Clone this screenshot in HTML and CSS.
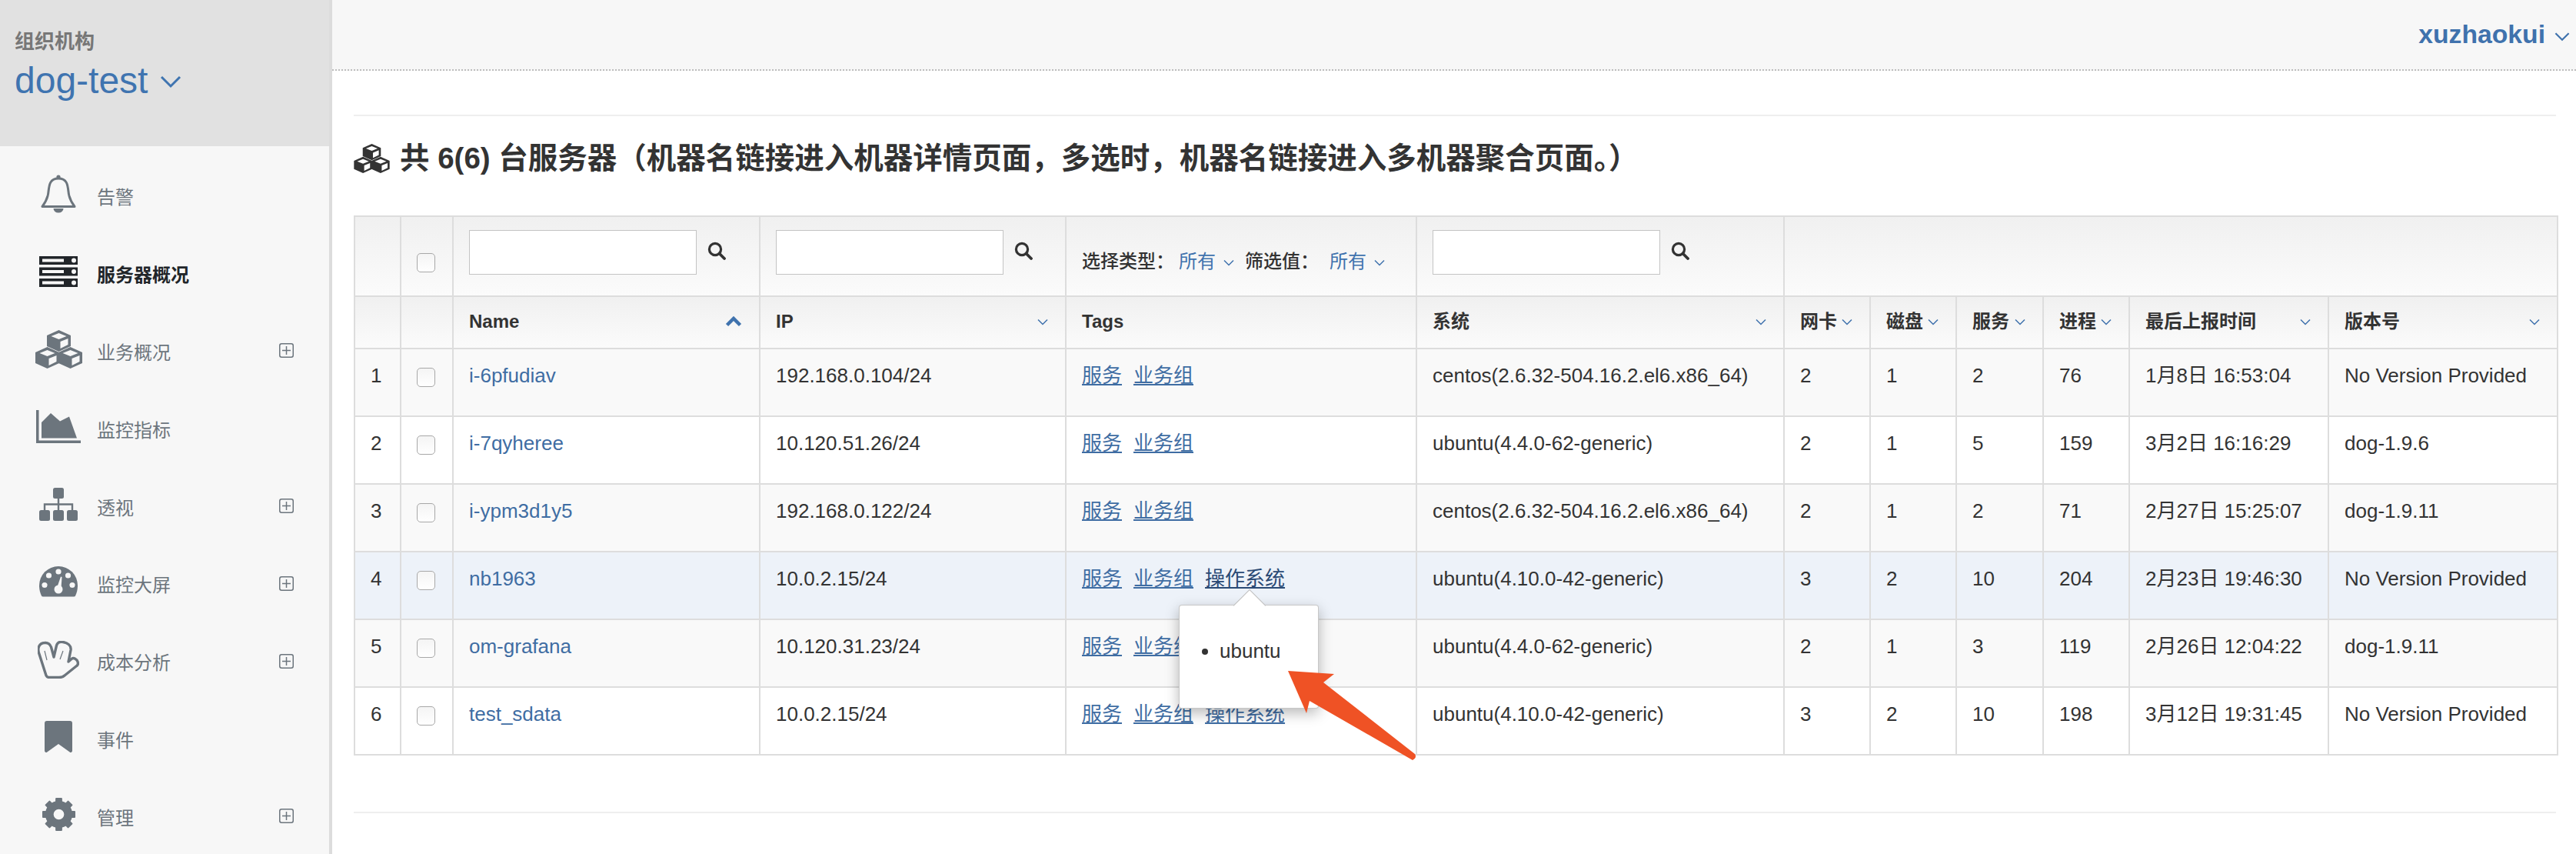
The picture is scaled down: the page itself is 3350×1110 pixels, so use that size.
FILE: index.html
```html
<!DOCTYPE html>
<html lang="zh-CN">
<head>
<meta charset="utf-8">
<title>服务器概况</title>
<link rel="stylesheet" href="styles.css">
</head>
<body>
<svg class="defs" width="0" height="0" aria-hidden="true">
  <defs>
    <path id="cube" fill="currentColor" fill-rule="evenodd" d="M15.5 0L31 7V21L15.5 28L0 21V7Z M15.5 4L25.5 8L15.5 12L5.5 8Z M17.5 15L27.5 11V19L17.5 24Z"/>
    <symbol id="cubes" viewBox="0 0 61 50">
      <use href="#cube" x="15" y="0"/><use href="#cube" x="0" y="22"/><use href="#cube" x="30" y="22"/>
    </symbol>
    <symbol id="plus" viewBox="0 0 19 19">
      <rect x="0.75" y="0.75" width="17.5" height="17.5" rx="2.5" fill="none" stroke="currentColor" stroke-width="1.5"/>
      <path d="M9.5 4V15M4 9.5H15" fill="none" stroke="currentColor" stroke-width="1.5"/>
    </symbol>
    <symbol id="search" viewBox="0 0 24 24">
      <circle cx="10" cy="10" r="7.6" fill="none" stroke="currentColor" stroke-width="3.2"/>
      <path d="M15.5 15.5L22 22" fill="none" stroke="currentColor" stroke-width="3.8" stroke-linecap="round"/>
    </symbol>
    <symbol id="chev" viewBox="0 0 14 9">
      <path d="M1 1.5L7 7.5L13 1.5" fill="none" stroke="currentColor" stroke-width="1.5"/>
    </symbol>
  </defs>
</svg>

<aside class="sidebar">
  <div class="org">
    <div class="org-label">组织机构</div>
    <div class="org-name">dog-test <svg class="org-chev"><use href="#chev"/></svg></div>
  </div>
  <nav class="nav">
    <a class="nav-item">
      <span class="nav-icon"><svg width="46" height="50" viewBox="0 0 46 50"><circle cx="23" cy="3" r="2.6" fill="currentColor"/><path d="M23 5C12 5 11 13 10 22C9.5 30 6 36 2 41.5H44C40 36 36.5 30 36 22C35 13 34 5 23 5Z" fill="none" stroke="currentColor" stroke-width="3" stroke-linejoin="round"/><path d="M16.5 44a6.5 5.5 0 0 0 13 0Z" fill="currentColor"/></svg></span>
      <span class="nav-text">告警</span>
    </a>
    <a class="nav-item active">
      <span class="nav-icon"><svg width="50" height="40" viewBox="0 0 50 40"><path fill="currentColor" fill-rule="evenodd" d="M0 0H50V11H0Z M4 3.5V7.5H32V3.5Z M0 14.5H50V25.5H0Z M4 18V22H32V18Z M0 29H50V40H0Z M4 32.5V36.500H32V32.500Z"/><circle cx="45" cy="5.500" r="3" fill="#f7f7f7"/><circle cx="45" cy="20" r="3" fill="#f7f7f7"/><circle cx="45" cy="34.500" r="3" fill="#f7f7f7"/></svg></span>
      <span class="nav-text">服务器概况</span>
    </a>
    <a class="nav-item">
      <span class="nav-icon"><svg width="61" height="50"><use href="#cubes"/></svg></span>
      <span class="nav-text">业务概况</span>
      <svg class="nav-plus"><use href="#plus"/></svg>
    </a>
    <a class="nav-item">
      <span class="nav-icon"><svg width="58" height="43" viewBox="0 0 58 43"><path fill="currentColor" d="M0 0H3.500V39.500H58V43H0Z M7 36.500V16L19 4L31 14.500L43 8.500L53 36.500Z"/></svg></span>
      <span class="nav-text">监控指标</span>
    </a>
    <a class="nav-item">
      <span class="nav-icon"><svg width="50" height="43" viewBox="0 0 50 43"><g fill="currentColor"><rect x="18" width="14" height="14" rx="2.500"/><rect y="29" width="14" height="14" rx="2.500"/><rect x="18" y="29" width="14" height="14" rx="2.500"/><rect x="36" y="29" width="14" height="14" rx="2.500"/></g><path d="M25 14V29M7 29V21.500H43V29" fill="none" stroke="currentColor" stroke-width="2.400"/></svg></span>
      <span class="nav-text">透视</span>
      <svg class="nav-plus"><use href="#plus"/></svg>
    </a>
    <a class="nav-item">
      <span class="nav-icon"><svg width="50" height="40" viewBox="0 0 50 40"><path fill="currentColor" d="M25 0A25 25 0 0 1 50 25C50 30 49 34 47 38.500Q46.500 39.500 45 39.500H5Q3.500 39.500 3 38.500C1 34 0 30 0 25A25 25 0 0 1 25 0Z"/><g fill="#f7f7f7"><circle cx="25" cy="7" r="3.600"/><circle cx="12.500" cy="12" r="3.600"/><circle cx="37.500" cy="12" r="3.600"/><circle cx="7" cy="24.500" r="3.600"/><circle cx="43" cy="24.500" r="3.600"/><circle cx="25" cy="30" r="5.500"/><path d="M23 28L28 13.500L29.500 14L28.500 29Z"/></g></svg></span>
      <span class="nav-text">监控大屏</span>
      <svg class="nav-plus"><use href="#plus"/></svg>
    </a>
    <a class="nav-item">
      <span class="nav-icon"><svg width="54" height="49" viewBox="0 0 54 49"><path d="M11 45L2 17C-1 9 2 3 9 2.500C14 2 16 4 17.500 8L21 21L24.500 6C26 1 30 1 33 1.500C39 2.500 44 6 43 12L40 27L44 23.500C47 21 51 24 52 27C53 30 52 32 50 33L35 45C33 47 30 47.500 28 47.500H15C13 47.500 12 47 11 45Z" fill="none" stroke="currentColor" stroke-width="3.400" stroke-linejoin="round"/><path d="M9 13L12 25M33 13L29 24" fill="none" stroke="currentColor" stroke-width="1.200"/></svg></span>
      <span class="nav-text">成本分析</span>
      <svg class="nav-plus"><use href="#plus"/></svg>
    </a>
    <a class="nav-item">
      <span class="nav-icon"><svg width="36" height="42" viewBox="0 0 36 42"><path fill="currentColor" d="M3 0H33A3 3 0 0 1 36 3V39A2 2 0 0 1 32.700 40.500L18 30L3.300 40.500A2 2 0 0 1 0 39V3A3 3 0 0 1 3 0Z"/></svg></span>
      <span class="nav-text">事件</span>
    </a>
    <a class="nav-item">
      <span class="nav-icon"><svg width="43" height="43" viewBox="0 0 44 44"><circle cx="22" cy="22" r="12.500" fill="none" stroke="currentColor" stroke-width="11"/><g fill="currentColor"><rect x="17.500" width="9" height="10" rx="1"/><rect x="17.500" width="9" height="10" rx="1" transform="rotate(45 22 22)"/><rect x="17.500" width="9" height="10" rx="1" transform="rotate(90 22 22)"/><rect x="17.500" width="9" height="10" rx="1" transform="rotate(135 22 22)"/><rect x="17.500" width="9" height="10" rx="1" transform="rotate(180 22 22)"/><rect x="17.500" width="9" height="10" rx="1" transform="rotate(225 22 22)"/><rect x="17.500" width="9" height="10" rx="1" transform="rotate(270 22 22)"/><rect x="17.500" width="9" height="10" rx="1" transform="rotate(315 22 22)"/></g></svg></span>
      <span class="nav-text">管理</span>
      <svg class="nav-plus"><use href="#plus"/></svg>
    </a>
  </nav>
</aside>

<main class="main">
  <header class="topbar">
    <span class="user">xuzhaokui</span>
    <svg class="user-chev"><use href="#chev"/></svg>
  </header>
  <section class="content">
    <hr class="rule">
    <h1 class="title"><svg class="title-icon"><use href="#cubes"/></svg>共 6(6) 台服务器（机器名链接进入机器详情页面，多选时，机器名链接进入多机器聚合页面。）</h1>
    <div class="table-wrap">
      <table class="grid">
        <colgroup>
          <col class="c-num"><col class="c-check"><col class="c-name"><col class="c-ip"><col class="c-tags"><col class="c-sys"><col class="c-small"><col class="c-small"><col class="c-small3"><col class="c-small"><col class="c-time"><col class="c-ver">
        </colgroup>
        <thead>
          <tr class="filters">
            <th></th>
            <th><input class="check check-head" type="checkbox"></th>
            <th><div class="search-box"><input class="search" type="text"><svg class="search-icon"><use href="#search"/></svg></div></th>
            <th><div class="search-box"><input class="search" type="text"><svg class="search-icon"><use href="#search"/></svg></div></th>
            <th class="tag-filter">
              <div class="tag-filter-row">
                <span>选择类型：</span><a class="drop">所有<svg class="drop-chev"><use href="#chev"/></svg></a>
                <span class="second">筛选值：</span><a class="drop">所有<svg class="drop-chev"><use href="#chev"/></svg></a>
              </div>
            </th>
            <th><div class="search-box"><input class="search" type="text"><svg class="search-icon"><use href="#search"/></svg></div></th>
            <th colspan="6"></th>
          </tr>
          <tr class="heads">
            <th></th>
            <th></th>
            <th><div class="head"><span>Name</span><svg class="sort-up" viewBox="0 0 22 14"><path d="M2.500 11.500L11 3L19.500 11.500" fill="none" stroke="currentColor" stroke-width="4.500"/></svg></div></th>
            <th><div class="head"><span>IP</span><svg class="sort"><use href="#chev"/></svg></div></th>
            <th><div class="head"><span>Tags</span></div></th>
            <th><div class="head"><span>系统</span><svg class="sort"><use href="#chev"/></svg></div></th>
            <th><div class="head"><span>网卡</span><svg class="sort"><use href="#chev"/></svg></div></th>
            <th><div class="head"><span>磁盘</span><svg class="sort"><use href="#chev"/></svg></div></th>
            <th><div class="head"><span>服务</span><svg class="sort"><use href="#chev"/></svg></div></th>
            <th><div class="head"><span>进程</span><svg class="sort"><use href="#chev"/></svg></div></th>
            <th><div class="head"><span>最后上报时间</span><svg class="sort"><use href="#chev"/></svg></div></th>
            <th><div class="head"><span>版本号</span><svg class="sort"><use href="#chev"/></svg></div></th>
          </tr>
        </thead>
        <tbody>
          <tr class="odd">
            <td>1</td><td><input class="check" type="checkbox"></td><td><a class="link">i-6pfudiav</a></td><td>192.168.0.104/24</td>
            <td><a class="tag">服务</a><a class="tag">业务组</a></td>
            <td>centos(2.6.32-504.16.2.el6.x86_64)</td><td>2</td><td>1</td><td>2</td><td>76</td><td>1月8日 16:53:04</td><td>No Version Provided</td>
          </tr>
          <tr>
            <td>2</td><td><input class="check" type="checkbox"></td><td><a class="link">i-7qyheree</a></td><td>10.120.51.26/24</td>
            <td><a class="tag">服务</a><a class="tag">业务组</a></td>
            <td>ubuntu(4.4.0-62-generic)</td><td>2</td><td>1</td><td>5</td><td>159</td><td>3月2日 16:16:29</td><td>dog-1.9.6</td>
          </tr>
          <tr class="odd">
            <td>3</td><td><input class="check" type="checkbox"></td><td><a class="link">i-ypm3d1y5</a></td><td>192.168.0.122/24</td>
            <td><a class="tag">服务</a><a class="tag">业务组</a></td>
            <td>centos(2.6.32-504.16.2.el6.x86_64)</td><td>2</td><td>1</td><td>2</td><td>71</td><td>2月27日 15:25:07</td><td>dog-1.9.11</td>
          </tr>
          <tr class="hover">
            <td>4</td><td><input class="check" type="checkbox"></td><td><a class="link">nb1963</a></td><td>10.0.2.15/24</td>
            <td><a class="tag">服务</a><a class="tag">业务组</a><a class="tag tag-on">操作系统</a></td>
            <td>ubuntu(4.10.0-42-generic)</td><td>3</td><td>2</td><td>10</td><td>204</td><td>2月23日 19:46:30</td><td>No Version Provided</td>
          </tr>
          <tr class="odd">
            <td>5</td><td><input class="check" type="checkbox"></td><td><a class="link">om-grafana</a></td><td>10.120.31.23/24</td>
            <td><a class="tag">服务</a><a class="tag">业务组</a></td>
            <td>ubuntu(4.4.0-62-generic)</td><td>2</td><td>1</td><td>3</td><td>119</td><td>2月26日 12:04:22</td><td>dog-1.9.11</td>
          </tr>
          <tr>
            <td>6</td><td><input class="check" type="checkbox"></td><td><a class="link">test_sdata</a></td><td>10.0.2.15/24</td>
            <td><a class="tag">服务</a><a class="tag">业务组</a><a class="tag">操作系统</a></td>
            <td>ubuntu(4.10.0-42-generic)</td><td>3</td><td>2</td><td>10</td><td>198</td><td>3月12日 19:31:45</td><td>No Version Provided</td>
          </tr>
        </tbody>
      </table>
      <div class="popover">
        <ul class="popover-list"><li>ubuntu</li></ul>
      </div>
      <svg class="annotation" width="160" height="130" viewBox="0 0 160 130"><path fill="#ef5225" d="M0 5L60 9L46 20L165 113Q168 118 162 121L28 44L24 60Z"/></svg>
    </div>
    <hr class="rule rule-bottom">
  </section>
</main>
</body>
</html>
```
FILE: styles.css
```css
* { box-sizing: border-box; }
html, body { margin: 0; height: 100%; }
body {
  display: flex;
  height: 1110px;
  overflow: hidden;
  background: #fff;
  font-family: "Liberation Sans", "Noto Sans CJK SC", sans-serif;
  font-size: 26px;
  color: #333;
}
.defs { position: absolute; }

/* Sidebar */
.sidebar {
  flex: 0 0 432px;
  background: #f7f7f7;
  border-right: 4px solid #dcdcdc;
}
.org {
  height: 190px;
  background: #e1e1e1;
  padding: 39px 19px 0;
}
.org-label { font-size: 26px; line-height: 30px; font-weight: 700; color: #777; }
.org-name { margin-top: 6px; font-size: 48px; line-height: 60px; color: #3f74b0; white-space: nowrap; }
.org-chev { width: 28px; height: 18px; margin-left: 2px; vertical-align: 6px; }
.nav { padding-top: 17px; }
.nav-item {
  display: flex;
  align-items: center;
  height: 100.800px;
  padding-right: 46px;
  color: #6c757d;
}
.nav-item.active { color: #212529; }
.nav-icon {
  flex: 0 0 62px;
  display: flex;
  justify-content: center;
  margin: 0 19px 10px 45px;
}
.nav-icon svg { display: block; }
.nav-text { font-size: 24px; line-height: 32px; }
.active .nav-text { font-weight: 700; }
.nav-plus { width: 19px; height: 19px; margin: 0 0 6px auto; }

/* Main */
.main { flex: 1; min-width: 0; display: flex; flex-direction: column; }
.topbar {
  flex: 0 0 92px;
  display: flex;
  align-items: flex-start;
  justify-content: flex-end;
  padding: 24px 8px 0 0;
  background: #f7f7f7;
  border-bottom: 2px dotted #bdbdbd;
}
.user { font-size: 33.700px; line-height: 40px; font-weight: 700; color: #3f72ad; }
.user-chev { width: 20px; height: 13px; margin: 17px 0 0 12px; color: #3f72ad; }
.content { padding: 0 26px 0 28px; }
.rule { height: 2px; margin: 57px 0 0; border: 0; background: #eee; }
.title {
  display: flex;
  align-items: center;
  margin: 35px 0 0;
  height: 40px;
  font-size: 38.500px;
  line-height: 40px;
  font-weight: 700;
  color: #333;
  white-space: nowrap;
}
.title-icon { width: 47px; height: 38px; margin: 0 13px 0 0; color: #333; }

/* Table */
.table-wrap { position: relative; margin-top: 54px; }
.grid {
  table-layout: fixed;
  width: 2865px;
  border-collapse: collapse;
}
.c-num { width: 60px; }
.c-check { width: 68px; }
.c-name { width: 399px; }
.c-ip { width: 398px; }
.c-tags { width: 456px; }
.c-sys { width: 478px; }
.c-small { width: 112px; }
.c-small3 { width: 113px; }
.c-time { width: 259px; }
.c-ver { width: 298px; }
.grid th, .grid td {
  border: 2px solid #ddd;
  padding: 0 0 0 20px;
  text-align: left;
  vertical-align: top;
  white-space: nowrap;
}
.grid thead th { background: linear-gradient(#f0f0f0, #fbfbfb); }
.filters th { height: 104px; padding-top: 17px; }
.heads th { height: 68px; padding-top: 16px; font-size: 24px; line-height: 32px; font-weight: 700; }
.grid td { height: 88px; padding-top: 18px; line-height: 32px; color: #333; }
.odd td { background: #f9f9f9; }
.hover td { background: #edf2f9; }
.check {
  appearance: none;
  display: block;
  width: 24px;
  height: 25px;
  margin: 6px 0 0;
  border: 1px solid #a8a8a8;
  border-radius: 5px;
  background: linear-gradient(#f4f4f4, #fff);
}
.check-head { margin-top: 30px; }
.search-box { display: flex; align-items: flex-start; gap: 14px; }
.search {
  width: 296px;
  height: 58px;
  border: 1px solid #c4c4c4;
  background: #fff;
  padding: 0 8px;
}
.search-icon { width: 24px; height: 24px; margin-top: 15px; color: #333; }
.tag-filter-row { display: flex; align-items: center; height: 32px; margin-top: 25px; font-size: 24px; line-height: 32px; font-weight: 500; }
.drop { margin-left: 6px; color: #3f72ad; font-weight: 400; }
.second + .drop { margin-left: 14px; }
.drop-chev { width: 14px; height: 9px; margin: 0 0 2px 10px; }
.second { margin-left: 14px; }
.head { display: flex; align-items: center; justify-content: space-between; padding-right: 22px; height: 32px; }
.sort { width: 14px; height: 9px; color: #3f72ad; flex: none; }
.sort-up { width: 22px; height: 14px; color: #3f72ad; flex: none; }
.link { color: #3f6da3; }
.tag { margin-right: 15px; color: #3f6da3; text-decoration: underline; text-underline-offset: 2px; }
.tag-on { color: #2a4a75; }

/* Popover */
.popover {
  position: absolute;
  left: 1073px;
  top: 506px;
  width: 182px;
  height: 135px;
  background: #fff;
  border: 1px solid rgba(0, 0, 0, .22);
  border-radius: 4px;
  box-shadow: 0 6px 18px rgba(0, 0, 0, .28);
  z-index: 2;
}
.popover::before {
  content: "";
  position: absolute;
  left: 76px;
  top: -15px;
  width: 29px;
  height: 29px;
  background: #fff;
  border-left: 1px solid rgba(0, 0, 0, .25);
  border-top: 1px solid rgba(0, 0, 0, .25);
  transform: rotate(45deg);
}
.popover-list {
  margin: 0;
  padding: 43px 0 0 52px;
  font-size: 26px;
  line-height: 32px;
  color: #333;
}
.annotation {
  position: absolute;
  left: 1215px;
  top: 587px;
  overflow: visible;
  z-index: 3;
}
.rule-bottom { margin-top: 73px; }
```
